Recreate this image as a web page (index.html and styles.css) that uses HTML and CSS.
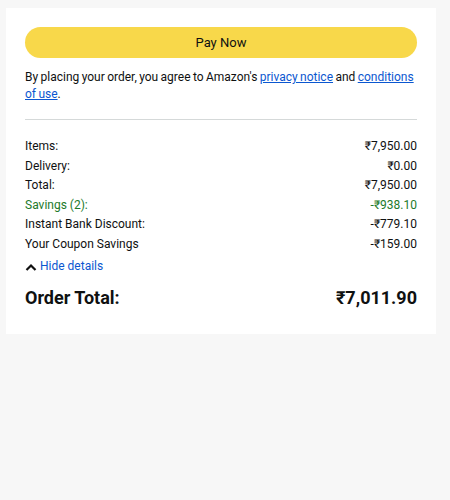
FILE: index.html
```html
<!DOCTYPE html>
<html>
<head>
<meta charset="utf-8">
<link rel="stylesheet" href="styles.css">
</head>
<body>
<div class="card">
  <button class="pay">Pay Now</button>
  <p class="terms">By placing your order, you agree to Amazon's <a href="#">privacy notice</a> and <a href="#">conditions of use</a>.</p>
  <hr class="divider">
  <div class="rows">
    <div class="row"><span>Items:</span><span>₹7,950.00</span></div>
    <div class="row"><span>Delivery:</span><span>₹0.00</span></div>
    <div class="row"><span>Total:</span><span>₹7,950.00</span></div>
    <div class="row savings"><span>Savings (2):</span><span>-₹938.10</span></div>
    <div class="row"><span>Instant Bank Discount:</span><span>-₹779.10</span></div>
    <div class="row"><span>Your Coupon Savings</span><span>-₹159.00</span></div>
  </div>
  <div class="toggle">
    <svg class="caret" width="12" height="8" viewBox="0 0 12 8"><path d="M1.5 7 L6 2.5 L10.5 7" fill="none" stroke="#111" stroke-width="2.2"/></svg>
    <a href="#">Hide details</a>
  </div>
  <div class="order-total"><span>Order Total:</span><span>₹7,011.90</span></div>
</div>
</body>
</html>
```
FILE: styles.css
```css
body {
  margin: 0;
  background: #f7f7f7;
  font-family: "Roboto", "Noto Sans", sans-serif;
  color: #0f1111;
}
.card {
  background: #fff;
  width: 430px;
  margin: 8px 0 0 6px;
  padding: 19px 19px 24px;
  box-sizing: border-box;
}
.pay {
  display: block;
  width: 100%;
  height: 31px;
  border: none;
  border-radius: 16px;
  background: #f8d84a;
  font-family: inherit;
  font-size: 13px;
  color: #0f1111;
  padding: 0;
}
.terms {
  margin: 11px 0 0;
  font-size: 12px;
  line-height: 17px;
  word-spacing: -0.6px;
}
.terms a {
  color: #0b57d0;
}
.divider {
  border: none;
  border-top: 1px solid #d5d9d9;
  margin: 16px 0 0;
}
.rows {
  margin-top: 17px;
}
.row {
  display: flex;
  justify-content: space-between;
  font-size: 12px;
  line-height: 19.5px;
}
.savings {
  color: #1d7a2a;
}
.toggle {
  display: flex;
  align-items: center;
  gap: 3px;
  margin-top: 4px;
  font-size: 12px;
  line-height: 17px;
}
.toggle a {
  color: #0b57d0;
  text-decoration: none;
}
.order-total {
  display: flex;
  justify-content: space-between;
  margin-top: 11px;
  font-size: 18px;
  font-weight: 700;
  line-height: 24px;
}
```
